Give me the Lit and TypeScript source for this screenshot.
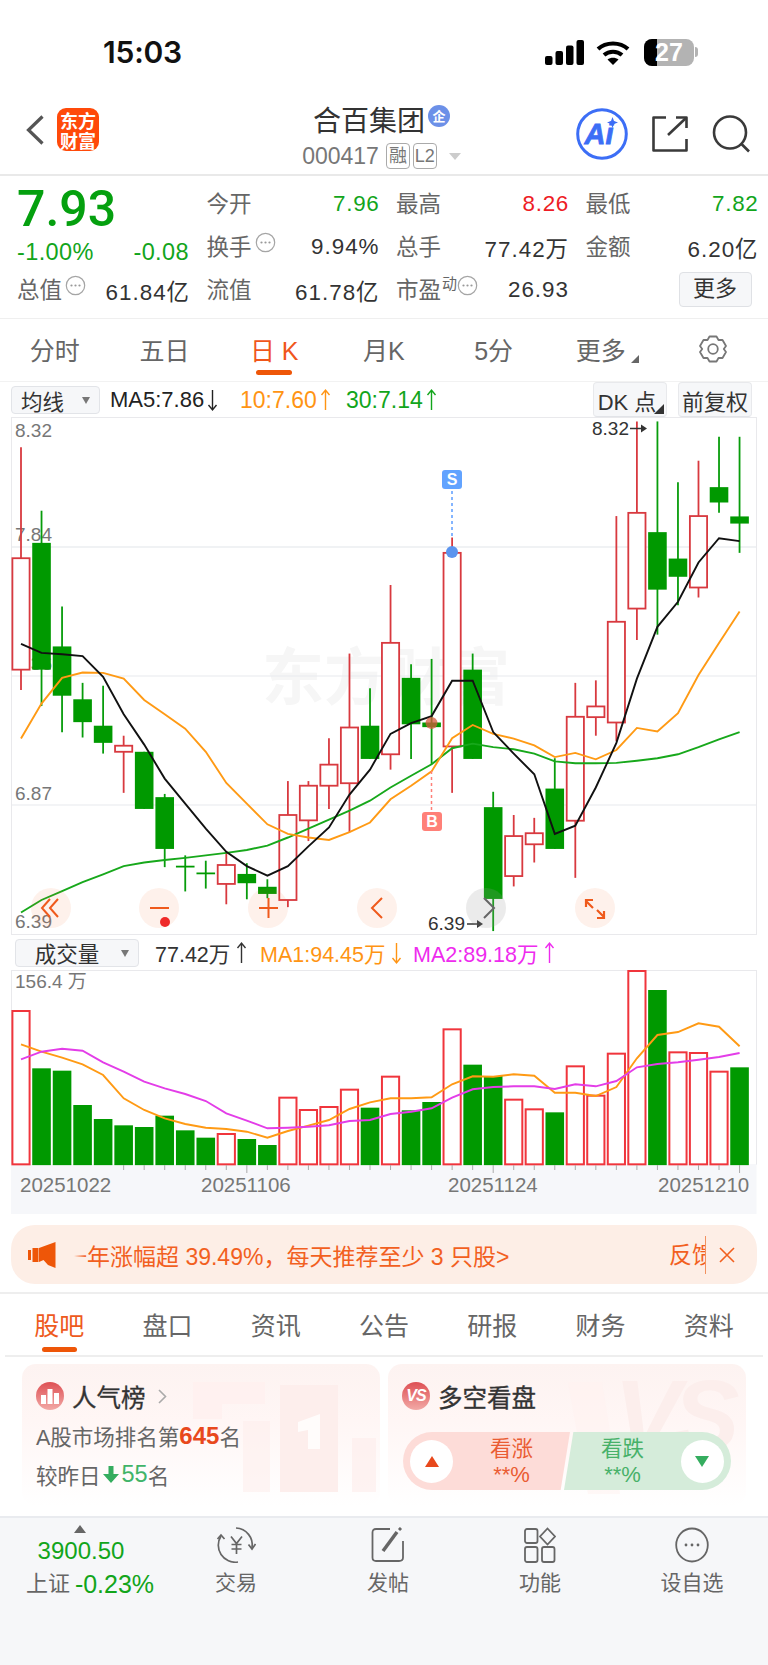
import { LitElement, html, svg, css } from "lit";
import { customElement } from "lit/decorators.js";

const cx = (i: number) => 21 + 20.53 * i;
const my = (p: number) => 400 + p / 2.8;
const vy = (p: number) => 930 + p / 3;

// type, wickTop, bodyTop, bodyBottom, wickBottom (crop units)
const K: [string, number, number, number, number][] = [
  ["r",132,443,755,812],["g",310,400,755,857],["g",578,690,828,930],["g",792,838,902,945],
  ["g",800,912,960,990],["r",940,968,985,1100],["g",985,985,1145,1145],["g",1103,1112,1257,1308],
  ["g",1275,1304,1309,1376],["g",1290,1323,1328,1368],["r",1265,1302,1355,1412],["g",1297,1327,1353,1398],
  ["g",1342,1363,1383,1395],["r",1067,1162,1400,1420],["r",1067,1080,1177,1235],["r",947,1021,1080,1145],
  ["r",710,917,1073,1210],["g",807,912,1005,1005],["r",518,680,992,1035],["g",740,778,908,1005],
  ["g",725,903,916,1020],["r",385,428,970,1100],["g",710,755,1005,1005],["g",1097,1140,1397,1487],
  ["r",1162,1221,1333,1362],["r",1170,1213,1244,1295],["g",1003,1088,1257,1257],["r",792,887,1178,1338],
  ["r",785,858,888,940],["r",325,621,903,955],["r",60,316,584,672],["g",60,370,531,657],
  ["g",230,444,495,575],["r",170,325,525,553],["g",103,244,287,316],["g",103,326,346,428],
];
const MA5 = [683,708,712,717,775,880,965,1060,1130,1200,1265,1305,1332,1305,1250,1197,1105,1035,935,905,885,786,786,930,990,1048,1215,1192,1085,960,780,635,565,455,387,395];
const MA10 = [948,850,778,763,764,780,840,880,920,985,1072,1130,1188,1215,1225,1232,1210,1183,1118,1080,1040,947,910,935,948,967,1000,988,1006,980,918,928,877,770,680,592];
const MA30 = [1435,1400,1375,1350,1328,1305,1295,1288,1282,1275,1268,1260,1248,1225,1200,1175,1150,1122,1085,1052,1020,975,962,972,978,990,1012,1017,1017,1016,1010,1003,992,972,950,930];
const VOL: [string, number][] = [
  ["r",243],["g",415],["g",422],["g",525],["g",567],["g",586],["g",591],["g",557],["g",601],["g",623],
  ["r",612],["g",627],["g",645],["r",503],["r",540],["r",531],["r",479],["g",533],["r",440],["g",541],
  ["g",516],["r",298],["g",404],["g",438],["r",509],["r",538],["g",547],["r",409],["r",497],["r",371],
  ["r",123],["g",180],["r",367],["r",369],["r",425],["g",412],
];
const VMA1 = [343,365,383,403,435,505,540,565,582,593,597,605,623,603,587,570,537,517,505,505,502,463,439,440,433,437,488,488,498,471,385,315,306,280,290,349];
const VMA2 = [388,365,356,362,397,425,455,475,492,513,550,572,595,593,590,586,573,570,552,545,535,503,478,471,469,469,477,463,469,453,412,402,397,389,381,369];

const line = (a: number[], f: (p: number) => number) =>
  a.map((p, i) => `${cx(i).toFixed(1)},${f(p).toFixed(1)}`).join(" ");

const dots = html`<svg class="dots" width="21" height="21" viewBox="0 0 21 21"><circle cx="10.5" cy="10.5" r="9.2" fill="none" stroke="#a5a5a5" stroke-width="1.2"/><circle cx="6.5" cy="10.5" r="1.1" fill="#999"/><circle cx="10.5" cy="10.5" r="1.1" fill="#999"/><circle cx="14.5" cy="10.5" r="1.1" fill="#999"/></svg>`;
const arrow = (down: boolean) => html`<svg class="arr" width="11" height="24" viewBox="0 0 11 24" fill="none" stroke="currentColor" stroke-width="1.4">${down ? svg`<path d="M5.5 2V22M1.5 17L5.5 22L9.5 17"/>` : svg`<path d="M5.5 22V2M1.5 7L5.5 2L9.5 7"/>`}</svg>`;

@customElement("app-root")
export class AppRoot extends LitElement {
  static styles = css`
    :host { display:block; width:768px; height:1665px; overflow:hidden; background:#fff; color:#333;
      font-family:"Liberation Sans","Noto Sans CJK SC",sans-serif; }
    * { box-sizing:border-box; }
    svg { display:block; flex:none; }
    .status { height:95px; display:flex; align-items:center; padding:9px 0 0 103px; position:relative; }
    .time { font:600 30px Inter,sans-serif; color:#111; width:442px; letter-spacing:-.2px; }
    .status .sig { margin-right:12px; }
    .status .wifi { margin-right:14px; }
    .batt { width:50px; height:27px; border-radius:8px; overflow:hidden; position:relative; background:#b3b3b3; display:flex; align-items:center; justify-content:center;
      color:#fff; font:700 25px "Liberation Sans",sans-serif; }
    .batt::before { content:""; position:absolute; left:0; top:0; bottom:0; width:13px; background:#000; }
    .batt span { position:relative; }
    .cap { width:3px; height:10px; background:#b3b3b3; border-radius:0 3px 3px 0; margin-left:1px; }
    .nav { height:81px; display:grid; grid-template-columns:1fr auto 1fr; border-bottom:2px solid #e9e9e9; }
    .nav-l { display:flex; align-items:center; padding:0 0 10px 26px; gap:13px; }
    .logo { width:42px; height:43px; border-radius:9px; background:#ff4a0a; color:#fff; font:700 18px/20px "Noto Sans CJK SC",sans-serif; display:flex; align-items:center; justify-content:center; text-align:center; }
    .nav-c { display:flex; flex-direction:column; align-items:center; padding-right:5px; }
    .title { height:47px; display:flex; align-items:center; gap:3px; font-size:28px; color:#333; }
    .qi { width:22px; height:22px; border-radius:50%; background:#6c90e8; color:#fff; font:700 13px/22px "Noto Sans CJK SC",sans-serif; text-align:center; margin-top:-6px; }
    .sub { display:flex; align-items:center; font-size:23px; color:#777; height:28px; }
    .tag { border:1.2px solid #aaa; border-radius:4px; height:26px; width:24px; font-size:18px; line-height:24px; text-align:center; margin-left:3px; color:#777; white-space:nowrap; }
    .tag.first { margin-left:7px; }
    .tri { width:0; height:0; border:6px solid transparent; border-top:7px solid #ccc; border-bottom:0; margin-left:12px; }
    .nav-r { display:flex; align-items:center; justify-content:flex-end; padding:0 18px 2px 0; gap:24px; }
    .quote { height:143px; border-bottom:1px solid #efefef; padding:6px 0 0 17px; display:grid; grid-template-columns:172px 172px 172px 172px; column-gap:17.5px; grid-template-rows:43px 43px 43px; font-size:22.4px; }
    .cell { display:flex; align-items:center; justify-content:space-between; white-space:nowrap; }
    .cell .lab { color:#666; display:flex; align-items:center; font-size:22.5px; margin-top:-4px; }
    .cell .val { color:#333; letter-spacing:1px; margin-right:-1px; }
    .cell .g, .cell .r { letter-spacing:.7px; margin-right:-1px; }
    .g { color:#12a51b; } .r { color:#ee1c25; }
    .price { font-family:Roboto,"Liberation Sans",sans-serif; font-size:50px; font-weight:500; color:#05a00f; line-height:43px; padding-top:6px; }
    .chg { font-size:23.5px; letter-spacing:.4px; color:#12a51b; padding-top:12px; }
    .dots { margin:-5px 0 0 3px; }
    .sup { font-size:15px; color:#666; margin:-10px 0 0 1px; }
    .sup + .dots { margin-left:0; }
    .more { width:73px; height:35px; border:1.2px solid #dfe1e5; border-radius:4px; background:#f6f7f9; font-size:22px; line-height:32px; text-align:center; margin-left:auto; margin-right:6px; color:#333; }
    .ktabs { height:63px; display:grid; grid-template-columns:repeat(7,109.7px); border-bottom:1px solid #f2f2f2; font-size:25px; color:#666; }
    .ktab { position:relative; display:flex; align-items:center; justify-content:center; padding-bottom:2px; white-space:nowrap; }
    .ktab.on { color:#f0561a; }
    .ktab.on::after { content:""; position:absolute; left:37px; width:36px; height:5.5px; bottom:6px; border-radius:3px; background:#ee5608; }
    .corner { width:0; height:0; border-style:solid; border-width:0 0 8px 8px; border-color:transparent transparent #666 transparent; align-self:flex-end; margin:0 -8px 16px 5px; }
    .bar { display:flex; align-items:center; font-size:22px; white-space:nowrap; }
    .bar1 { height:35px; padding:1px 0 0 11px; }
    .sel { height:28px; background:#f6f7f9; border:1.2px solid #e2e4e8; border-radius:4px; display:flex; align-items:center; justify-content:center; position:relative; color:#333; font-size:21.5px; }
    .sel::after { content:""; position:absolute; right:9px; top:10px; border:4.5px solid transparent; border-top:7px solid #777; border-bottom:0; }
    .sel.s1 { width:89px; padding-right:26px; margin-right:10px; }
    .item { display:flex; align-items:center; gap:3px; }
    .i1 { width:130px; color:#222; } .i2 { width:106px; color:#ff9413; font-size:23px; } .i3 { width:247px; color:#12a51b; font-size:23px; }
    .ma1 { color:#ff9413; } .ma2 { color:#ee2bee; }
    .btn { height:35px; background:#f6f7f9; border:1.2px solid #e8e9ec; border-bottom:1.2px solid #e2e4e8; border-radius:4px; width:74px; display:flex; align-items:center; justify-content:center; position:relative; margin-top:-1px; }
    .btn.dk { margin-right:11px; padding-right:6px; }
    .btn.dk::after { content:""; position:absolute; right:2px; bottom:2px; border-style:solid; border-width:0 0 10px 10px; border-color:transparent transparent #333 transparent; }
    .bar2 { height:35px; padding:0 0 0 15px; font-size:21.5px; }
    .sel.s2 { width:124px; padding-right:20px; margin-right:16px; }
    .v0 { width:105px; color:#333; gap:6px; } .v1 { width:153px; gap:6px; } .ma2 { gap:6px; }
    .chev { margin-left:4px; }
    .ad-wrap { height:80px; padding:11px 11px 0; border-bottom:2px solid #eee; }
    .ad { height:59px; border-radius:24px; background:#fdeee6; display:flex; align-items:center; padding-left:17px; color:#f2601f; font-size:23px; white-space:nowrap; }
    .ticker { width:595px; margin-left:18px; overflow:hidden; position:relative; }
    .ticker span { display:block; margin-left:-10px; }
    .ticker::before { content:""; position:absolute; inset:0 auto 0 0; width:12px; background:linear-gradient(90deg,#fdeee6,rgba(253,238,230,0)); }
    .fb { width:37px; overflow:hidden; border-right:1px solid #f2915f; height:38px; line-height:38px; }
    .x { margin-left:13px; }
    .tabs { height:63px; margin:0 5px; display:grid; grid-template-columns:repeat(7,1fr); border-bottom:2px solid #eee; font-size:25px; color:#666; }
    .tab { position:relative; display:flex; align-items:center; justify-content:center; padding-bottom:1px; }
    .tab.on { color:#ee5a1d; }
    .tab.on::after { content:""; position:absolute; left:37px; width:35px; height:5.5px; bottom:3px; border-radius:3px; background:#ee5608; }
    .cards { height:159px; padding:7px 0 0 22px; display:flex; gap:8px; }
    .card { width:358px; height:142px; border-radius:14px; position:relative; overflow:hidden; padding:18px 0 0 14px; background:linear-gradient(180deg,#fdf3f1 0%,#fff6f5 40%,#fff 100%); }
    .deco { position:absolute; left:0; top:0; }
    .head { position:relative; display:flex; align-items:center; height:28px; gap:8px; font-size:24.5px; color:#333; -webkit-text-stroke:.3px #333; }
    .ic { width:28px; height:28px; border-radius:50%; background:linear-gradient(180deg,#de5054,#f2a9a6); color:#fff; display:flex; align-items:center; justify-content:center; -webkit-text-stroke:0; }
    .vs { font:italic 700 16px "Liberation Sans",sans-serif; letter-spacing:-1px; }
    .rk { position:relative; height:39px; display:flex; align-items:center; font-size:21.5px; color:#666; white-space:nowrap; }
    .rk.first { margin-top:6px; }
    .rk b { font-size:24px; color:#e8481c; font-weight:700; }
    .rk svg { margin:0 2px; }
    .down { font-size:23.5px; color:#41b468; margin-left:1px; }
    .pill { position:relative; margin:22px 0 0 1px; width:328px; height:58px; border-radius:29px; overflow:hidden; display:flex; }
    .side { width:167px; height:58px; display:flex; align-items:center; }
    .side.up { background:#fddcd8; clip-path:polygon(0 0,100% 0,94.4% 100%,0 100%); padding-left:7px; color:#ea5c33; }
    .side.dn { background:#d5ecda; clip-path:polygon(5.6% 0,100% 0,100% 100%,0 100%); margin-left:-6px; padding-right:7px; color:#47b169; justify-content:flex-end; }
    .circ { width:43px; height:43px; border-radius:50%; background:#fff; display:flex; align-items:center; justify-content:center; flex:none; }
    .txt { margin:0 auto; text-align:center; font-size:21.5px; line-height:27px; }
    .txt i { display:block; font-style:normal; font-size:22px; line-height:23px; }
    .dock { height:149px; background:#f6f7f9; border-top:2px solid #e9ebef; padding:0 0 0 8px; display:grid; grid-template-columns:repeat(5,152px); }
    .d { display:flex; flex-direction:column; align-items:center; padding-top:9px; color:#666; font-size:21px; }
    .d span { margin-top:7px; line-height:26px; }
    .d0 { padding-top:7px; }
    .d0 .idx { color:#12a51b; font-size:24px; line-height:30px; margin:3px 6px 0 0; }
    .d0 .tri2 { width:0; height:0; border:6px solid transparent; border-bottom:8px solid #666; border-top:0; margin-right:8px; }
    .d0 .lbl { margin:3px 0 0 12px; font-size:22px; line-height:30px; white-space:nowrap; display:flex; gap:5px; }
    .d0 .lbl em { font-style:normal; color:#12a51b; font-size:25px; }
  `;

  private mainChart() {
    const btn = (x: number, grey = false) => svg`<circle cx=${x} cy="908" r="20" fill=${grey ? "#9a9a9a" : "#f0641e"} fill-opacity=${grey ? ".2" : ".09"}/>`;
    const O = "#ef5a1c";
    return html`<svg width="768" height="518" viewBox="0 417 768 518" font-family='"Liberation Sans",sans-serif'>
      <rect x="11.5" y="417.5" width="745" height="517" fill="#fff" stroke="#e9e9ec"/>
      <text x="262" y="700" font-family='"Noto Sans CJK SC",sans-serif' font-weight="700" font-size="62" fill="#f6f6f6">东方财富</text>
      ${[547, 676, 805].map((y) => svg`<line x1="12" x2="756" y1=${y} y2=${y} stroke=${y === 547 ? "#e2e5ea" : "#e8eaee"} stroke-width="1.2"/>`)}
      <g font-size="19" fill="#777">
        <text x="15" y="437">8.32</text><text x="15" y="541">7.84</text><text x="15" y="670">7.36</text><text x="15" y="800">6.87</text><text x="15" y="928">6.39</text>
      </g>
      ${K.map(([t, wt, bt, bb, wb], i) => {
        const c = cx(i); const col = t === "r" ? "#d8393f" : "#079c0b";
        return svg`<line x1=${c} x2=${c} y1=${my(wt)} y2=${my(wb)} stroke=${col} stroke-width="1.8"/>
        ${t === "r"
          ? svg`<rect x=${c - 8.6} y=${my(bt)} width="17.2" height=${(bb - bt) / 2.8} fill="#fff" stroke=${col} stroke-width="1.8"/>`
          : svg`<rect x=${c - 9.3} y=${my(bt)} width="18.6" height=${Math.max(1.5, (bb - bt) / 2.8)} fill="#009900"/>`}`;
      })}
      <polyline points=${line(MA30, my)} fill="none" stroke="#17a81b" stroke-width="1.9"/>
      <polyline points=${line(MA10, my)} fill="none" stroke="#ff9a14" stroke-width="1.9"/>
      <polyline points=${line(MA5, my)} fill="none" stroke="#111" stroke-width="1.9"/>
      <line x1="452" x2="452" y1="491" y2="536" stroke="#5c9dff" stroke-width="1.5" stroke-dasharray="3 3"/>
      <circle cx="452" cy="552" r="6" fill="#5b94ee"/>
      <rect x="442" y="470" width="20" height="19" rx="3" fill="#62a3ff"/>
      <text x="452" y="485" text-anchor="middle" font-size="16" font-weight="700" fill="#fff">S</text>
      <line x1="431.5" x2="431.5" y1="771" y2="811" stroke="#ff7f78" stroke-width="1.5" stroke-dasharray="3 3"/>
      <circle cx="431.5" cy="723" r="6" fill="#d65a3c" fill-opacity=".75"/>
      <rect x="422" y="812" width="20" height="19" rx="3" fill="#ff8078"/>
      <text x="432" y="827" text-anchor="middle" font-size="16" font-weight="700" fill="#fff">B</text>
      <g font-size="19" fill="#333">
        <text x="592" y="435">8.32</text><text x="428" y="930">6.39</text>
      </g>
      <g stroke="#333" stroke-width="1.5" fill="#333">
        <line x1="630" x2="645" y1="428.5" y2="428.5"/><path d="M641 424.5L647 428.5L641 432.5Z" stroke="none"/>
        <line x1="467" x2="480" y1="924" y2="924"/><path d="M477 920L483 924L477 928Z" stroke="none"/>
      </g>
      ${btn(51)}${btn(159)}${btn(268)}${btn(377)}${btn(486, true)}${btn(595)}
      <g fill="none" stroke=${O} stroke-width="2">
        <path d="M50 899L42 908L50 917M58 899L50 908L58 917"/>
        <path d="M150 908H169"/>
        <path d="M259 908H278M268.5 898V918"/>
        <path d="M382 898L372 908L382 918"/>
        <path d="M484 898L494 908L484 918" stroke="#666"/>
        <path d="M586 901L593 908M586 907V900H593M604 917L597 910M604 911V918H597" stroke-width="2.2"/>
      </g>
      <circle cx="165" cy="922" r="5" fill="#ef2a2a"/>
    </svg>`;
  }

  private volChart() {
    const ticks = K.map((_, i) => i).filter((i) => i >= 5);
    return html`<svg width="768" height="244" viewBox="0 970 768 244" font-family='"Liberation Sans","Noto Sans CJK SC",sans-serif'>
      <rect x="11.5" y="970.5" width="745" height="194" fill="#fff" stroke="#e9e9ec"/>
      <rect x="11" y="1164" width="745.5" height="50" fill="#f6f7fa"/>
      <text x="15" y="987.5" font-size="19" fill="#777">156.4 万</text>
      ${VOL.map(([t, p], i) => {
        const c = cx(i); const y = vy(p); const b = vy(703);
        return t === "r"
          ? svg`<rect x=${c - 8.6} y=${y} width="17.2" height=${b - y} fill="#fff" stroke="#f0353c" stroke-width="2"/>`
          : svg`<rect x=${c - 9.3} y=${y} width="18.6" height=${b - y + 0.8} fill="#009900"/>`;
      })}
      ${ticks.map((i) => svg`<line x1=${cx(i)} x2=${cx(i)} y1="1165" y2=${i === 11 || i === 23 || i === 35 ? 1173 : 1170} stroke="#aaa" stroke-width="1"/>`)}
      <polyline points=${line(VMA1, vy)} fill="none" stroke="#ff9a14" stroke-width="1.9"/>
      <polyline points=${line(VMA2, vy)} fill="none" stroke="#e33de8" stroke-width="1.9"/>
      <g font-size="20.5" fill="#777">
        <text x="20" y="1192">20251022</text><text x="201" y="1192">20251106</text><text x="448" y="1192">20251124</text><text x="658" y="1192">20251210</text>
      </g>
    </svg>`;
  }

  render() {
    return html`
      <div class="status">
        <div class="time">15:03</div>
        <svg class="sig" width="39" height="25" viewBox="0 0 39 25" fill="#000"><rect x="0" y="16" width="7.5" height="9" rx="2"/><rect x="10.5" y="11" width="7.5" height="14" rx="2"/><rect x="21" y="5.5" width="7.5" height="19.5" rx="2"/><rect x="31.5" y="0" width="7.5" height="25" rx="2"/></svg>
        <svg class="wifi" width="34" height="25" viewBox="0 0 34 25" fill="none" stroke="#000" stroke-width="4"><path d="M2 9C10 1.5 24 1.5 32 9"/><path d="M8 15C13 10.5 21 10.5 26 15"/><path d="M17 25L11.5 19.5C14.5 17 19.5 17 22.5 19.5Z" fill="#000" stroke="none"/></svg>
        <div class="batt"><span>27</span></div><div class="cap"></div>
      </div>
      <div class="nav">
        <div class="nav-l">
          <svg width="18" height="30" viewBox="0 0 18 30" fill="none" stroke="#555" stroke-width="3.2"><path d="M16.5 1.5L2.5 15L16.5 28.5"/></svg>
          <div class="logo">东方<br />财富</div>
        </div>
        <div class="nav-c">
          <div class="title">合百集团<span class="qi">企</span></div>
          <div class="sub">000417<span class="tag first">融</span><span class="tag">L2</span><span class="tri"></span></div>
        </div>
        <div class="nav-r">
          <svg width="52" height="52" viewBox="0 0 52 52" font-family='"Liberation Sans",sans-serif'><circle cx="26" cy="26" r="24.3" fill="#fff" stroke="#3c6ef6" stroke-width="3"/><text x="8.5" y="36" font-size="29" font-weight="700" font-style="italic" fill="#3c6ef6" stroke="#3c6ef6" stroke-width=".8">Ai</text><path d="M36.5 9L38 13L42 14.5L38 16L36.5 20L35 16L31 14.5L35 13Z" fill="#3c6ef6"/></svg>
          <svg width="36" height="36" viewBox="0 0 36 36" fill="none" stroke="#3a3a3a" stroke-width="2.6" stroke-linejoin="round"><path d="M14 1.5H1.5V34.5H34.5V23"/><path d="M24 1.5H34.5V12"/><path d="M34 2L16 19"/></svg>
          <svg width="38" height="38" viewBox="0 0 38 38" fill="none" stroke="#3a3a3a" stroke-width="2.6"><circle cx="18" cy="17.5" r="16"/><path d="M29.5 29L37 36.5"/></svg>
        </div>
      </div>
      <div class="quote">
        <div class="price">7.93</div>
        <div class="cell"><span class="lab">今开</span><span class="g">7.96</span></div>
        <div class="cell"><span class="lab">最高</span><span class="r">8.26</span></div>
        <div class="cell"><span class="lab">最低</span><span class="g">7.82</span></div>
        <div class="cell chg"><span>-1.00%</span><span>-0.08</span></div>
        <div class="cell"><span class="lab">换手${dots}</span><span class="val">9.94%</span></div>
        <div class="cell"><span class="lab">总手</span><span class="val">77.42万</span></div>
        <div class="cell"><span class="lab">金额</span><span class="val">6.20亿</span></div>
        <div class="cell"><span class="lab">总值${dots}</span><span class="val">61.84亿</span></div>
        <div class="cell"><span class="lab">流值</span><span class="val">61.78亿</span></div>
        <div class="cell"><span class="lab">市盈<span class="sup">动</span>${dots}</span><span class="val">26.93</span></div>
        <div class="cell"><span class="more">更多</span></div>
      </div>
      <div class="ktabs">
        <div class="ktab">分时</div><div class="ktab">五日</div><div class="ktab on">日 K</div><div class="ktab">月K</div><div class="ktab">5分</div>
        <div class="ktab">更多<span class="corner"></span></div>
        <div class="ktab"><svg width="30" height="30" viewBox="0 0 30 30" fill="none" stroke="#777" stroke-width="1.8" stroke-linejoin="round"><path d="M11.5 2.5H18.5L20.5 6L24.5 6L28 12L25.8 15L28 18L24.5 24H20.5L18.5 27.5H11.5L9.5 24H5.5L2 18L4.2 15L2 12L5.5 6H9.5Z"/><circle cx="15" cy="15" r="4.8"/></svg></div>
      </div>
      <div class="bar bar1">
        <div class="sel s1">均线</div>
        <div class="item i1">MA5:7.86${arrow(true)}</div>
        <div class="item i2">10:7.60${arrow(false)}</div>
        <div class="item i3">30:7.14${arrow(false)}</div>
        <div class="btn dk">DK 点</div>
        <div class="btn">前复权</div>
      </div>
      ${this.mainChart()}
      <div class="bar bar2">
        <div class="sel s2">成交量</div>
        <div class="item v0">77.42万${arrow(false)}</div>
        <div class="item v1 ma1">MA1:94.45万${arrow(true)}</div>
        <div class="item ma2">MA2:89.18万${arrow(false)}</div>
      </div>
      ${this.volChart()}
      <div class="ad-wrap">
        <div class="ad">
          <svg width="28" height="26" viewBox="0 0 28 26" fill="#ee5608"><rect x="0" y="8" width="3" height="10"/><rect x="4.5" y="6" width="6" height="14"/><path d="M11 6L27.5 0V26L20 23L15.5 18L11 20Z"/></svg>
          <div class="ticker"><span>一年涨幅超 39.49%，每天推荐至少 3 只股&gt;</span></div>
          <div class="fb">反馈</div>
          <svg class="x" width="16" height="16" viewBox="0 0 16 16" stroke="#f2601f" stroke-width="1.6"><path d="M1 1L15 15M15 1L1 15"/></svg>
        </div>
      </div>
      <div class="tabs">
        <div class="tab on">股吧</div><div class="tab">盘口</div><div class="tab">资讯</div><div class="tab">公告</div><div class="tab">研报</div><div class="tab">财务</div><div class="tab">资料</div>
      </div>
      <div class="cards">
        <div class="card">
          <svg class="deco" width="358" height="142" viewBox="0 0 358 142" fill="#fdeeec">
            <path d="M171 18H243V40H200V55H171Z" fill="#fff0ee" fill-opacity=".7"/>
            <rect x="221" y="57" width="27" height="71" fill-opacity=".6"/>
            <rect x="258" y="21" width="58" height="107"/>
            <rect x="330" y="74" width="24" height="54" fill-opacity=".7"/>
            <path d="M276 58L298 50V85H286V66L276 68Z" fill="#fff" fill-opacity=".8"/>
          </svg>
          <div class="head"><span class="ic"><svg width="18" height="16" viewBox="0 0 18 16" fill="#fff"><rect x="0" y="7" width="5" height="9"/><rect x="6.5" y="1" width="5" height="15"/><rect x="13" y="5" width="5" height="11"/></svg></span>人气榜<svg class="chev" width="9" height="15" viewBox="0 0 9 15" fill="none" stroke="#aaa" stroke-width="1.6"><path d="M1 1L7.5 7.5L1 14"/></svg></div>
          <div class="rk first">A股市场排名第<b>645</b>名</div>
          <div class="rk">较昨日<svg width="16" height="17" viewBox="0 0 16 17" fill="#35ad5f"><path d="M5.5 0H10.5V8H16L8 17L0 8H5.5Z"/></svg><span class="down">55</span>名</div>
        </div>
        <div class="card">
          <svg class="deco" width="358" height="142" viewBox="0 0 358 142" font-family='"Liberation Sans",sans-serif'>
            <path d="M180 18L214 18L232 130H200Z" fill="#fff1ef" fill-opacity=".5"/>
            <text x="226" y="86" font-size="100" font-weight="700" font-style="italic" fill="#fceeec" letter-spacing="-8">VS</text>
          </svg>
          <div class="head"><span class="ic vs">VS</span>多空看盘</div>
          <div class="pill">
            <div class="side up">
              <div class="circ"><svg width="14" height="11" viewBox="0 0 14 11" fill="#e8481c"><path d="M7 0L14 11H0Z"/></svg></div>
              <div class="txt">看涨<i>**%</i></div>
            </div>
            <div class="side dn">
              <div class="txt">看跌<i>**%</i></div>
              <div class="circ"><svg width="14" height="11" viewBox="0 0 14 11" fill="#35ad5f"><path d="M7 11L14 0H0Z"/></svg></div>
            </div>
          </div>
        </div>
      </div>
      <div class="dock">
        <div class="d d0"><div class="tri2"></div><div class="idx">3900.50</div><div class="lbl">上证<em>-0.23%</em></div></div>
        <div class="d"><svg width="40" height="36" viewBox="0 0 40 36" fill="none" stroke="#666" stroke-width="1.7"><path d="M20 1A17 17 0 0 1 36 21"/><path d="M32.5 17.5L36 22L39.5 17"/><path d="M22 35A17 17 0 0 1 5 9"/><path d="M1.5 12L5 8L8.5 12"/><path d="M15 9.5L20.5 16.5L26 9.5M20.5 16.5V27M15.5 17.5H25.5M15.5 22H25.5"/></svg><span>交易</span></div>
        <div class="d"><svg width="34" height="36" viewBox="0 0 34 36" fill="none" stroke="#666" stroke-width="1.8"><path d="M19 2H5Q1.5 2 1.5 5.5V30.5Q1.5 34 5 34H28Q32 34 32 30.5V14"/><path d="M12 24L26 5" stroke-width="3.5"/><path d="M28 3L30 1" stroke-width="3"/></svg><span>发帖</span></div>
        <div class="d"><svg width="32" height="36" viewBox="0 0 32 36" fill="none" stroke="#666" stroke-width="1.8"><rect x="1" y="2" width="12.5" height="14" rx="2"/><path d="M23.5 1.5L31 9.5L23.5 17.5L16 9.5Z"/><rect x="1" y="20" width="12.5" height="15" rx="2"/><rect x="18" y="20" width="12.5" height="15" rx="2"/></svg><span>功能</span></div>
        <div class="d"><svg width="34" height="36" viewBox="0 0 34 36" fill="none" stroke="#666" stroke-width="1.8"><ellipse cx="17" cy="18" rx="15.8" ry="16.5"/><circle cx="11" cy="18" r="1.4" fill="#666" stroke="none"/><circle cx="17" cy="18" r="1.4" fill="#666" stroke="none"/><circle cx="23" cy="18" r="1.4" fill="#666" stroke="none"/></svg><span>设自选</span></div>
      </div>
    `;
  }
}
